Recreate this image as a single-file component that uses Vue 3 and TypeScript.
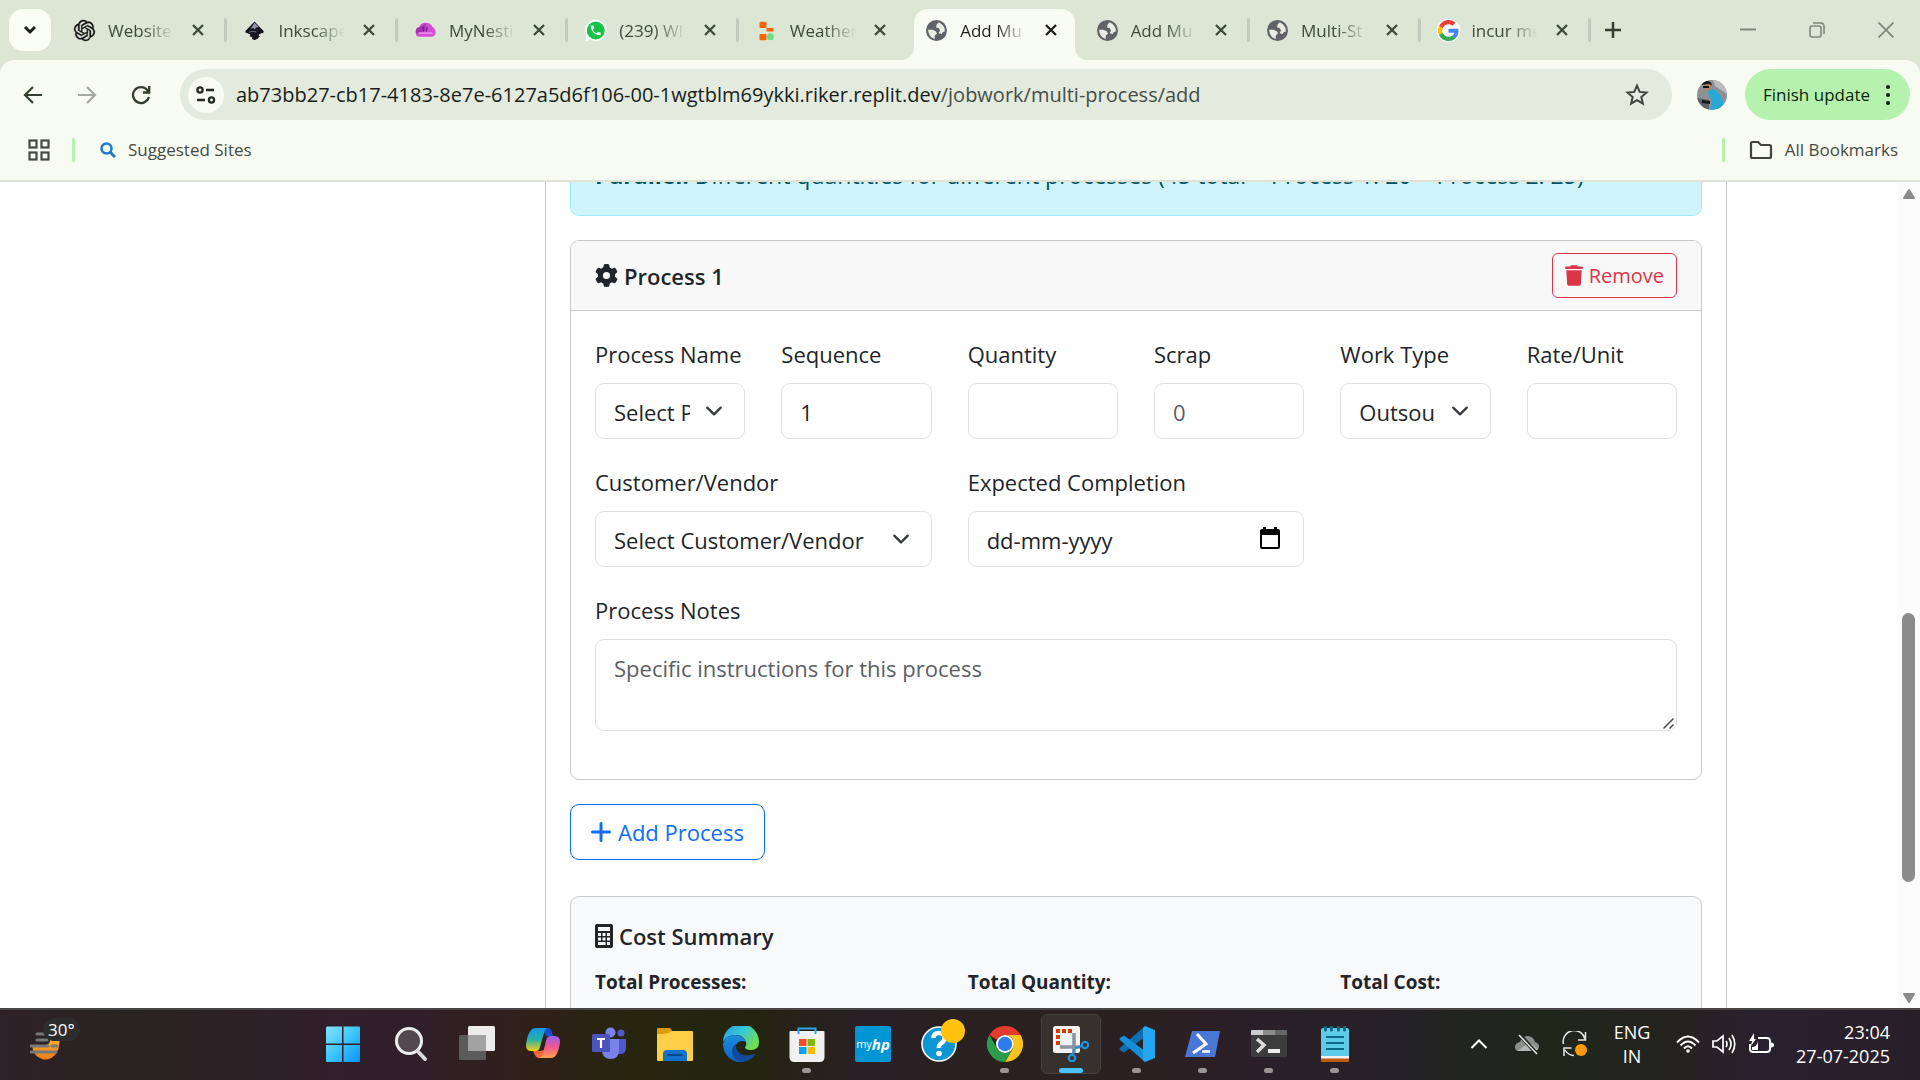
<script setup lang="ts">
import { onMounted, ref } from 'vue'

interface Tab {
  id: number
  title: string
  icon: 'openai' | 'inkscape' | 'nesting' | 'whatsapp' | 'weather' | 'globe' | 'google'
  active?: boolean
}

const tabs: Tab[] = [
  { id: 1, title: 'Website', icon: 'openai' },
  { id: 2, title: 'Inkscape', icon: 'inkscape' },
  { id: 3, title: 'MyNesti', icon: 'nesting' },
  { id: 4, title: '(239) Wl', icon: 'whatsapp' },
  { id: 5, title: 'Weather', icon: 'weather' },
  { id: 6, title: 'Add Mu', icon: 'globe', active: true },
  { id: 7, title: 'Add Mu', icon: 'globe' },
  { id: 8, title: 'Multi-St', icon: 'globe' },
  { id: 9, title: 'incur me', icon: 'google' },
]

interface TaskApp {
  name: string
  running?: boolean
  active?: boolean
}

const apps: TaskApp[] = [
  { name: 'Start' },
  { name: 'Search' },
  { name: 'Task View' },
  { name: 'Copilot' },
  { name: 'Teams' },
  { name: 'File Explorer' },
  { name: 'Edge' },
  { name: 'Store', running: true },
  { name: 'myHP' },
  { name: 'HP Support' },
  { name: 'Chrome', running: true },
  { name: 'Snipping Tool', running: true, active: true },
  { name: 'VS Code', running: true },
  { name: 'PowerShell', running: true },
  { name: 'Terminal', running: true },
  { name: 'Notepad', running: true },
]

const sequence = ref('1')
const quantity = ref('')
const scrap = ref('')
const rate = ref('')
const completion = ref('')
const notes = ref('')

const pane = ref<HTMLElement | null>(null)
onMounted(() => {
  if (pane.value) pane.value.scrollTop = 52
})
</script>

<template>
  <div class="screen">
    <header class="browser">
      <div class="tabstrip">
        <button class="tab-search" aria-label="Search tabs">
          <svg width="14" height="10" viewBox="0 0 14 10"><path d="M2 2l5 5 5-5" fill="none" stroke="#1a1f18" stroke-width="3" /></svg>
        </button>
        <div class="tabs">
          <div v-for="tab in tabs" :key="tab.id" class="tab" :class="{ active: tab.active, plain: tab.id === 5 }">
            <svg v-if="tab.icon === 'openai'" class="fav" viewBox="0 0 24 24"><path fill="#111" stroke="#111" stroke-width=".4" d="M22.2819 9.8211a5.9847 5.9847 0 0 0-.5157-4.9108 6.0462 6.0462 0 0 0-6.5098-2.9A6.0651 6.0651 0 0 0 4.9807 4.1818a5.9847 5.9847 0 0 0-3.9977 2.9 6.0462 6.0462 0 0 0 .7427 7.0966 5.98 5.98 0 0 0 .511 4.9107 6.051 6.051 0 0 0 6.5146 2.9001A5.9847 5.9847 0 0 0 13.2599 24a6.0557 6.0557 0 0 0 5.7718-4.2058 5.9894 5.9894 0 0 0 3.9977-2.9001 6.0557 6.0557 0 0 0-.7475-7.0729zm-9.022 12.6081a4.4755 4.4755 0 0 1-2.8764-1.0408l.1419-.0804 4.7783-2.7582a.7948.7948 0 0 0 .3927-.6813v-6.7369l2.02 1.1686a.071.071 0 0 1 .038.052v5.5826a4.504 4.504 0 0 1-4.4945 4.4944zm-9.6607-4.1254a4.4708 4.4708 0 0 1-.5346-3.0137l.142.0852 4.783 2.7582a.7712.7712 0 0 0 .7806 0l5.8428-3.3685v2.3324a.0804.0804 0 0 1-.0332.0615L9.74 19.9502a4.4992 4.4992 0 0 1-6.1408-1.6464zM2.3408 7.8956a4.485 4.485 0 0 1 2.3655-1.9728V11.6a.7664.7664 0 0 0 .3879.6765l5.8144 3.3543-2.0201 1.1685a.0757.0757 0 0 1-.071 0l-4.8303-2.7865A4.504 4.504 0 0 1 2.3408 7.872zm16.5963 3.8558L13.1038 8.364 15.1192 7.2a.0757.0757 0 0 1 .071 0l4.8303 2.7913a4.4944 4.4944 0 0 1-.6765 8.1042v-5.6772a.79.79 0 0 0-.407-.667zm2.0107-3.0231l-.142-.0852-4.7735-2.7818a.7759.7759 0 0 0-.7854 0L9.409 9.2297V6.8974a.0662.0662 0 0 1 .0284-.0615l4.8303-2.7866a4.4992 4.4992 0 0 1 6.6802 4.66zM8.3065 12.863l-2.02-1.1638a.0804.0804 0 0 1-.038-.0567V6.0742a4.4992 4.4992 0 0 1 7.3757-3.4537l-.142.0805L8.704 5.459a.7948.7948 0 0 0-.3927.6813zm1.0976-2.3654l2.602-1.4998 2.6069 1.4998v2.9994l-2.5974 1.4997-2.6067-1.4997Z" /></svg>
            <svg v-else-if="tab.icon === 'inkscape'" class="fav" viewBox="0 0 24 24">
              <path d="M12 1L23 12.500q.8 3-4 3.500l-2 1.500 3 1-3 1.500-1 2-4 1.500-4-1.500 1-2-5-1.500 3-1.500-5-2Q0 14 1.500 12z" fill="#15171f" stroke="#fff" stroke-width="1" />
              <path d="M12 3l5 5-3 .5-1.500 2-2-1.500-3 1z" fill="#8e96a8" />
              <path d="M6 14q5-2 8 0" stroke="#59617a" stroke-width="1.500" fill="none" />
            </svg>
            <svg v-else-if="tab.icon === 'nesting'" class="fav" viewBox="0 0 24 24">
              <path d="M1 15Q0 9 5 8q1-5 7-5t8 5q4 2 3.500 7-1 4-5 4H5q-4 0-4-4z" fill="#d44fd3" />
              <path d="M1 15Q0 9 5 8l7-4v7q-5 5-11 4z" fill="#a532b4" />
              <path d="M9 8l1 5m4-5l-1 5" stroke="#6a1b84" stroke-width="1.500" />
              <path d="M4 15h16" stroke="#e78ae4" stroke-width="2" />
            </svg>
            <svg v-else-if="tab.icon === 'whatsapp'" class="fav" viewBox="0 0 24 24">
              <path d="M0 24.500l1.800-6.400A12.300 12.300 0 1 1 6.500 22.700z" fill="#fff" />
              <circle cx="12.300" cy="12" r="10.300" fill="#15c447" />
              <path transform="translate(4.800 4.500) scale(.62)" fill="#fff" d="M6.620 10.790c1.440 2.830 3.760 5.140 6.590 6.590l2.200-2.200c.27-.27.67-.36 1.020-.24 1.120.37 2.330.57 3.570.57.55 0 1 .45 1 1V20c0 .55-.45 1-1 1-9.390 0-17-7.610-17-17 0-.55.45-1 1-1h3.500c.55 0 1 .45 1 1 0 1.250.2 2.450.57 3.570.11.35.03.74-.25 1.020l-2.200 2.200z" />
            </svg>
            <svg v-else-if="tab.icon === 'weather'" class="fav" viewBox="0 0 24 24">
              <rect x="4" y="2" width="8" height="7" rx="1" fill="#fb640d" /><rect x="12" y="9" width="8" height="4" rx="1" fill="#fb640d" /><rect x="4" y="16" width="8" height="7" rx="1" fill="#fb640d" /><circle cx="16.500" cy="19" r="4" fill="#70dc82" />
            </svg>
            <svg v-else-if="tab.icon === 'globe'" class="fav" viewBox="0 0 24 24">
              <circle cx="12" cy="12" r="12" fill="#5f6368" />
              <path d="M14.500 2.500L12 5.500l-.5 3 3 .5 1.500 3-1.500 3 3.500 1 1-2 2.500-1Q22 6 14.500 2.500z" fill="#e7ede2" />
              <path d="M2.300 11l5.200.2 4 2 1 2.500-2.500 2v4Q3 19.500 2.300 11z" fill="#e7ede2" />
            </svg>
            <svg v-else class="fav" viewBox="0 0 48 48">
              <circle cx="24" cy="24" r="27" fill="#fff" />
              <path fill="#EA4335" d="M24 9.500c3.540 0 6.710 1.220 9.210 3.600l6.850-6.850C35.900 2.380 30.470 0 24 0 14.620 0 6.510 5.380 2.560 13.220l7.980 6.190C12.430 13.720 17.740 9.500 24 9.500z" />
              <path fill="#4285F4" d="M46.980 24.550c0-1.570-.15-3.090-.38-4.550H24v9.020h12.940c-.58 2.960-2.260 5.480-4.780 7.180l7.730 6c4.510-4.180 7.090-10.360 7.090-17.650z" />
              <path fill="#FBBC05" d="M10.530 28.590c-.48-1.450-.76-2.990-.76-4.590s.27-3.140.76-4.590l-7.980-6.190C.92 16.460 0 20.120 0 24c0 3.880.92 7.540 2.560 10.780l7.970-6.190z" />
              <path fill="#34A853" d="M24 48c6.480 0 11.930-2.130 15.890-5.810l-7.730-6c-2.150 1.450-4.920 2.300-8.160 2.300-6.260 0-11.570-4.220-13.470-9.910l-7.980 6.190C6.510 42.620 14.620 48 24 48z" />
            </svg>
            <span class="tab-title">{{ tab.title }}</span>
            <button class="tab-close" :aria-label="`Close ${tab.title}`">
              <svg width="12" height="12" viewBox="0 0 12 12"><path d="M1 1l10 10M11 1L1 11" fill="none" stroke="currentColor" stroke-width="2.300" /></svg>
            </button>
          </div>
        </div>
        <button class="new-tab" aria-label="New tab">
          <svg width="16" height="16" viewBox="0 0 16 16"><path d="M8 0v16M0 8h16" stroke="#333d31" stroke-width="2.500" /></svg>
        </button>
        <div class="window-buttons">
          <button aria-label="Minimize"><svg width="16" height="16" viewBox="0 0 16 16"><path d="M0 7.500h16" stroke="#7f867b" stroke-width="2" /></svg></button>
          <button aria-label="Restore"><svg width="16" height="16" viewBox="0 0 16 16" fill="none" stroke="#7f867b" stroke-width="1.600"><rect x="1" y="4" width="11" height="11" rx="2" /><path d="M4 1h7.500q3.500 0 3.500 3.500V12" /></svg></button>
          <button aria-label="Close"><svg width="16" height="16" viewBox="0 0 16 16"><path d="M.5.5l15 15M15.500.5l-15 15" stroke="#7f867b" stroke-width="1.700" /></svg></button>
        </div>
      </div>

      <div class="toolbar">
        <nav class="nav-buttons" aria-label="History">
          <button aria-label="Back"><svg width="20" height="20" viewBox="0 0 20 20"><path d="M19 10H2.500M10 2L2 10l8 8" fill="none" stroke="#33402f" stroke-width="2.200" /></svg></button>
          <button aria-label="Forward"><svg width="20" height="20" viewBox="0 0 20 20"><path d="M1 10h16.500M10 2l8 8-8 8" fill="none" stroke="#a3a9a0" stroke-width="2.200" /></svg></button>
          <button aria-label="Reload"><svg width="20" height="20" viewBox="0 0 20 20"><path d="M17.800 12A8 8 0 1 1 16.500 5.300L18 7M18.200 1v6.500H12" fill="none" stroke="#33402f" stroke-width="2.300" /></svg></button>
        </nav>
        <div class="omnibox">
          <button class="site-info" aria-label="View site information">
            <svg width="20" height="18" viewBox="0 0 20 18" fill="none" stroke="#222b20" stroke-width="2.300"><circle cx="4" cy="4" r="2.600" /><path d="M10 4h8M1 14h8" /><circle cx="15.500" cy="14" r="2.600" /></svg>
          </button>
          <div class="url"><span>ab73bb27-cb17-4183-8e7e-6127a5d6f106-00-1wgtblm69ykki.riker.replit.dev</span><span class="url-path">/jobwork/multi-process/add</span></div>
          <button class="star" aria-label="Bookmark this tab">
            <svg width="24" height="24" viewBox="0 0 24 24"><path d="M12 2.600l2.700 6.300 6.800.6-5.200 4.500 1.600 6.700-5.900-3.500-5.900 3.500 1.600-6.700L2.500 9.500l6.800-.6z" fill="none" stroke="#3f463d" stroke-width="2" /></svg>
          </button>
        </div>
        <button class="avatar" aria-label="Profile">
          <svg width="30" height="30" viewBox="0 0 30 30">
            <defs><clipPath id="avatarClip"><circle cx="15" cy="15" r="15" /></clipPath></defs>
            <g clip-path="url(#avatarClip)">
              <rect width="30" height="30" fill="#8d9194" /><path d="M16 0h14v14L18 6z" fill="#b9bcbe" /><path d="M0 18l12 2v10H0z" fill="#5c6165" />
              <path d="M11 10q7-3 11 4 4 6 5 10l-4 5-10 1 2-10-4-6z" fill="#27a9d6" />
              <circle cx="10" cy="7" r="4" fill="#b77f63" /><path d="M5 5q0-4 5-4 4 0 5 4l-4-1z" fill="#16181b" /><path d="M6 7h6" stroke="#111" stroke-width="2" />
              <path d="M5 20l8 1v3l-8-1z" fill="#15191d" />
            </g>
          </svg>
        </button>
        <button class="update">
          <span>Finish update</span>
          <svg width="4" height="22" viewBox="0 0 4 22" fill="#0c1f0c"><circle cx="2" cy="3" r="2" /><circle cx="2" cy="11" r="2" /><circle cx="2" cy="19" r="2" /></svg>
        </button>
      </div>

      <div class="bookmarks">
        <button class="apps-grid" aria-label="Apps">
          <svg width="22" height="22" viewBox="0 0 22 22" fill="none" stroke="#454a43" stroke-width="2.200"><rect x="1.500" y="1.500" width="7" height="7" /><rect x="13.500" y="1.500" width="7" height="7" /><rect x="1.500" y="13.500" width="7" height="7" /><rect x="13.500" y="13.500" width="7" height="7" /></svg>
        </button>
        <span class="divider"></span>
        <a class="bookmark" href="#suggested">
          <svg width="16" height="16" viewBox="0 0 16 16" fill="none" stroke="#1f7bd0"><circle cx="6.500" cy="6.500" r="5" stroke-width="2.500" /><path d="M10 10l5 5" stroke-width="3" /></svg>
          <span>Suggested Sites</span>
        </a>
        <span class="divider last"></span>
        <a class="bookmark all" href="#bookmarks">
          <svg width="24" height="20" viewBox="0 0 24 20"><path d="M2 3.500Q2 2 3.500 2H9l3 3h8.500Q22 5 22 6.500v10q0 1.500-1.500 1.500h-17Q2 18 2 16.500z" fill="none" stroke="#3f443d" stroke-width="2.200" /></svg>
          <span>All Bookmarks</span>
        </a>
      </div>
    </header>

    <div class="viewport">
      <main ref="pane" class="pane">
        <div class="sheet">
          <div class="alert"><strong>Parallel:</strong> Different quantities for different processes (45 total = Process 1: 20 + Process 2: 25)</div>

          <section class="card">
            <div class="card-header">
              <h6>
                <svg width="23" height="23" viewBox="0 0 512 512" fill="#212529"><path d="M495.900 166.600c3.200 8.700 .5 18.400-6.400 24.600l-43.300 39.400c1.100 8.300 1.700 16.800 1.700 25.400s-.6 17.100-1.700 25.400l43.300 39.400c6.900 6.200 9.600 15.900 6.400 24.600c-4.400 11.900-9.700 23.300-15.800 34.300l-4.700 8.100c-6.600 11-14 21.400-22.100 31.200c-5.900 7.200-15.700 9.600-24.500 6.800l-55.700-17.700c-13.400 10.300-28.200 18.900-44 25.400l-12.500 57.100c-2 9.100-9 16.300-18.200 17.800c-13.800 2.300-28 3.500-42.500 3.500s-28.700-1.200-42.500-3.500c-9.200-1.500-16.200-8.700-18.200-17.800l-12.500-57.100c-15.800-6.500-30.600-15.100-44-25.400L83.100 425.900c-8.800 2.800-18.600 .3-24.500-6.800c-8.100-9.800-15.500-20.200-22.100-31.200l-4.700-8.100c-6.100-11-11.400-22.400-15.800-34.300c-3.200-8.700-.5-18.400 6.400-24.600l43.300-39.400C64.600 273.100 64 264.600 64 256s.6-17.100 1.700-25.400L22.400 191.200c-6.900-6.200-9.600-15.900-6.400-24.600c4.400-11.900 9.700-23.300 15.800-34.300l4.700-8.100c6.600-11 14-21.400 22.100-31.200c5.900-7.200 15.700-9.600 24.500-6.800l55.700 17.700c13.400-10.300 28.200-18.900 44-25.400l12.500-57.100c2-9.100 9-16.300 18.200-17.800C227.300 1.200 241.500 0 256 0s28.700 1.200 42.500 3.500c9.200 1.500 16.200 8.700 18.200 17.800l12.500 57.100c15.800 6.500 30.600 15.100 44 25.400l55.700-17.700c8.800-2.800 18.600-.3 24.500 6.800c8.100 9.800 15.500 20.200 22.100 31.200l4.700 8.100c6.100 11 11.400 22.400 15.800 34.300zM256 336a80 80 0 1 0 0-160 80 80 0 1 0 0 160z" /></svg>
                <span>Process 1</span>
              </h6>
              <button class="remove">
                <svg width="18" height="21" viewBox="0 0 448 512" fill="#dc3545"><path d="M135.200 17.700L128 32H32C14.300 32 0 46.300 0 64S14.300 96 32 96H416c17.700 0 32-14.300 32-32s-14.300-32-32-32H320l-7.200-14.300C307.400 6.800 296.300 0 284.200 0H163.800c-12.100 0-23.200 6.800-28.600 17.700zM416 128H32L53.200 467c1.600 25.300 22.600 45 47.900 45H346.900c25.300 0 46.300-19.700 47.900-45L416 128z" /></svg>
                <span>Remove</span>
              </button>
            </div>
            <div class="card-body">
              <div class="grid six">
                <div class="field">
                  <label for="process-name">Process Name</label>
                  <div class="control">
                    <select id="process-name"><option>Select Process</option></select>
                    <svg class="chevron" viewBox="0 0 16 16"><path d="m2 5 6 6 6-6" /></svg>
                  </div>
                </div>
                <div class="field"><label for="sequence">Sequence</label><input id="sequence" v-model="sequence" type="text" inputmode="numeric" /></div>
                <div class="field"><label for="quantity">Quantity</label><input id="quantity" v-model="quantity" type="text" inputmode="numeric" /></div>
                <div class="field"><label for="scrap">Scrap</label><input id="scrap" v-model="scrap" type="text" inputmode="numeric" placeholder="0" /></div>
                <div class="field">
                  <label for="work-type">Work Type</label>
                  <div class="control">
                    <select id="work-type"><option>Outsourced</option></select>
                    <svg class="chevron" viewBox="0 0 16 16"><path d="m2 5 6 6 6-6" /></svg>
                  </div>
                </div>
                <div class="field"><label for="rate">Rate/Unit</label><input id="rate" v-model="rate" type="text" inputmode="decimal" /></div>
              </div>
              <div class="grid three">
                <div class="field">
                  <label for="vendor">Customer/Vendor</label>
                  <div class="control">
                    <select id="vendor"><option>Select Customer/Vendor</option></select>
                    <svg class="chevron" viewBox="0 0 16 16"><path d="m2 5 6 6 6-6" /></svg>
                  </div>
                </div>
                <div class="field">
                  <label for="completion">Expected Completion</label>
                  <div class="control date">
                    <input id="completion" v-model="completion" type="text" placeholder="dd-mm-yyyy" />
                    <button class="calendar" aria-label="Open calendar">
                      <svg width="20" height="22" viewBox="0 0 20 22"><path d="M0 4q0-2 2-2h1V0h3v2h8V0h3v2h1q2 0 2 2v16q0 2-2 2H2q-2 0-2-2zM2 8v12h16V8z" fill="#000" fill-rule="evenodd" /></svg>
                    </button>
                  </div>
                </div>
              </div>
              <div class="field notes">
                <label for="notes">Process Notes</label>
                <div class="control">
                  <textarea id="notes" v-model="notes" rows="2" placeholder="Specific instructions for this process"></textarea>
                  <svg class="grip" width="11" height="11" viewBox="0 0 11 11"><path d="M.5 10.500l10-10M6.500 10.500l4-4" stroke="#4a4a4a" stroke-width="1.500" /></svg>
                </div>
              </div>
            </div>
          </section>

          <button class="add">
            <svg width="20" height="20" viewBox="0 0 20 20"><path d="M10 1.500v17M1.500 10h17" stroke="#0d6efd" stroke-width="3" stroke-linecap="round" /></svg>
            <span>Add Process</span>
          </button>

          <section class="card summary">
            <h6>
              <svg width="18" height="24" viewBox="0 0 18 24"><rect width="18" height="24" rx="2" fill="#212529" /><path d="M3 3h12v4H3zM3 9h3v3H3zm4.500 0h3v3h-3zM12 9h3v3h-3zM3 13.500h3v3H3zm4.500 0h3v3h-3zm4.500 0h3v3h-3zM3 18h7.500v3H3zm9 0h3v3h-3z" fill="#f8f9fa" /></svg>
              <span>Cost Summary</span>
            </h6>
            <div class="grid three totals">
              <strong>Total Processes:</strong>
              <strong>Total Quantity:</strong>
              <strong>Total Cost:</strong>
            </div>
          </section>
        </div>
      </main>
      <div class="scrollbar" aria-hidden="true">
        <svg width="16" height="12" viewBox="0 0 16 12"><path d="M8 2l5 8H3z" fill="#8b8b8b" stroke="#8b8b8b" stroke-width="2" stroke-linejoin="round" /></svg>
        <div class="track"><div class="thumb"></div></div>
        <svg width="16" height="12" viewBox="0 0 16 12"><path d="M8 10l5-8H3z" fill="#8b8b8b" stroke="#8b8b8b" stroke-width="2" stroke-linejoin="round" /></svg>
      </div>
    </div>

    <footer class="taskbar">
      <button class="weather" aria-label="Weather">
        <svg width="30" height="30" viewBox="0 0 30 30">
          <defs><linearGradient id="sun" x1="0" y1="0" x2="0" y2="1"><stop offset="0" stop-color="#f7b62d" /><stop offset="1" stop-color="#f07a1c" /></linearGradient></defs>
          <path d="M2 14Q22 16 20 6l9-1q2 10-4 18-6 6-13 4-8-2-10-13z" fill="url(#sun)" />
          <path d="M7 2h7M7 8h10M1 14h17M22 14h5M1 20h25" stroke="#77787a" stroke-width="3" stroke-linecap="round" />
        </svg>
        <span class="degrees">30°</span>
      </button>

      <nav class="apps" aria-label="Taskbar">
        <button v-for="app in apps" :key="app.name" class="app" :class="{ running: app.running, active: app.active }" :aria-label="app.name">
          <svg v-if="app.name === 'Start'" viewBox="0 0 36 36">
            <defs><linearGradient id="win" x1="0" y1="0" x2="1" y2="1"><stop offset="0" stop-color="#86e2fb" /><stop offset=".5" stop-color="#3cc6fb" /><stop offset="1" stop-color="#0a91f8" /></linearGradient></defs>
            <path d="M2 .5h15v17H1v-16zM18.500.5H34q1 0 1 1v16H18.500zM1 19h16v17H2q-1 0-1-1zM18.500 19H35v16q0 1-1 1H18.500z" fill="url(#win)" />
          </svg>
          <svg v-else-if="app.name === 'Search'" viewBox="0 0 36 36"><circle cx="16" cy="15" r="12.500" fill="#54484f" stroke="#eceeed" stroke-width="3" /><path d="M24.500 25L32 33" stroke="#d8dbdb" stroke-width="4" stroke-linecap="round" /></svg>
          <svg v-else-if="app.name === 'Task View'" viewBox="0 0 36 36"><rect x="9" y="0" width="27" height="25" rx="1.500" fill="#ececec" /><rect x="0" y="9" width="27" height="25" rx="1.500" fill="#5b5b5b" /><rect x="9" y="9" width="18" height="16" fill="#a2a2a2" /></svg>
          <svg v-else-if="app.name === 'Copilot'" viewBox="0 0 36 36">
            <defs>
              <linearGradient id="cpA" x1="0" y1="0" x2="0" y2="1"><stop offset="0" stop-color="#1795ef" /><stop offset=".5" stop-color="#27b2a6" /><stop offset="1" stop-color="#f7cf12" /></linearGradient>
              <linearGradient id="cpB" x1="0" y1="0" x2="0" y2="1"><stop offset="0" stop-color="#9a5cf5" /><stop offset=".5" stop-color="#f0588e" /><stop offset="1" stop-color="#ffa44c" /></linearGradient>
            </defs>
            <path d="M17 2h6q3 0 4 4l1 4h-7z" fill="#1c4cc9" />
            <path d="M11 2h11q-2 1-3 5l-4 14q-1 4-4 4H6q-5 0-5-6Q3 2 11 2z" fill="url(#cpA)" />
            <path d="M8 25h7l4-1-1 8H14q-3 0-4-3z" fill="#f4663a" />
            <path d="M23 10h7q5 0 5 6-2 16-9 16H14q3-1 4-5l3-12q1-5 4-5z" fill="url(#cpB)" />
          </svg>
          <svg v-else-if="app.name === 'Teams'" viewBox="0 0 36 36">
            <circle cx="30" cy="7" r="3.500" fill="#5059c9" /><path d="M25 13h10v9q0 6-6 6h-4z" fill="#5059c9" /><circle cx="19.500" cy="6.500" r="5" fill="#7b83eb" /><path d="M11 13h17v11q0 9-8.500 9-7 0-8.500-7z" fill="#7b83eb" />
            <rect x="1" y="8" width="18" height="18" rx="1.500" fill="#4b53bc" /><path d="M6 13h8M10 13v9" stroke="#fff" stroke-width="2.200" />
          </svg>
          <svg v-else-if="app.name === 'File Explorer'" viewBox="0 0 36 36">
            <path d="M0 3q0-1 1-1h12l3 4v5H0z" fill="#dd9b0b" /><path d="M0 8q8 0 11-1l4-2h20q1 0 1 1v28q0 1-1 1H1q-1 0-1-1z" fill="#ffcf48" /><path d="M6 35V28q0-4 4-4h16q4 0 4 4v7z" fill="#1373cc" /><path d="M11 29h14" stroke="#0a4688" stroke-width="2" stroke-linecap="round" />
          </svg>
          <svg v-else-if="app.name === 'Edge'" viewBox="0 0 36 36">
            <defs>
              <linearGradient id="edA" x1="0" y1="0" x2="1" y2=".6"><stop offset="0" stop-color="#2a9be0" /><stop offset=".5" stop-color="#35c5dd" /><stop offset="1" stop-color="#6fe04d" /></linearGradient>
              <linearGradient id="edB" x1="0" y1="0" x2="0" y2="1"><stop offset="0" stop-color="#1a8ee0" /><stop offset="1" stop-color="#0c62be" /></linearGradient>
            </defs>
            <path d="M0 16A18 18 0 0 1 36 16q0 8-8 8-6 0-6-3 2-2 1-5-2-6-9-7Q4 8 0 16z" fill="url(#edA)" />
            <path d="M0 18Q2 9 12 9q9 1 11 7-7-3-10 3-2 8 6 13 3 3 2 4A18 18 0 0 1 0 18z" fill="url(#edB)" />
            <path d="M13 18q-1 9 8 11 7 1 12-2-4 8-14 9-9-2-10-10-0-6 4-8z" fill="#114a9a" />
          </svg>
          <svg v-else-if="app.name === 'Store'" viewBox="0 0 36 36">
            <path d="M.5 6q0-1 1-1h33q1 0 1 1v25q0 5-5 5h-25q-5 0-5-5z" fill="#f1f1f1" /><path d="M9.500 8V2.500h17V8" fill="none" stroke="#2ba8ea" stroke-width="2" />
            <path d="M10 13h7.500v7H10z" fill="#f25022" /><path d="M18.500 13H26v7h-7.500z" fill="#7fba00" /><path d="M10 21h7.500v7H10z" fill="#00a4ef" /><path d="M18.500 21H26v7h-7.500z" fill="#ffb900" />
          </svg>
          <span v-else-if="app.name === 'myHP'" class="myhp">my<b>hp</b></span>
          <svg v-else-if="app.name === 'HP Support'" viewBox="0 0 36 36">
            <circle cx="18" cy="18" r="17" fill="#0d96d6" stroke="#fff" stroke-width="1.600" /><path d="M12.500 12q0-5 5.500-5t5.500 5q0 3-3 5t-2.500 5" fill="none" stroke="#fff" stroke-width="4.500" /><circle cx="18" cy="27.500" r="2.800" fill="#fff" />
          </svg>
          <svg v-else-if="app.name === 'Chrome'" viewBox="0 0 36 36">
            <path d="M18 0a18 18 0 0 1 15.600 9H18a9 9 0 0 0-8 5L2.400 9A18 18 0 0 1 18 0z" fill="#e33b2e" /><path d="M33.600 9A18 18 0 0 1 18 36l7.800-13.500A9 9 0 0 0 18 9z" fill="#fcc31e" /><path d="M18 36A18 18 0 0 1 2.400 9l7.800 13.500A9 9 0 0 0 25.800 22.500z" fill="#2b9d4b" /><circle cx="18" cy="18" r="9" fill="#fff" /><circle cx="18" cy="18" r="7.200" fill="#2f7bee" />
          </svg>
          <svg v-else-if="app.name === 'Snipping Tool'" viewBox="0 0 36 36">
            <rect x="0" y="0" width="27" height="27" rx="2.500" fill="#f0f2f4" /><path d="M3 3h4v4H3zM9 3h4v4H9zM15 3h4v4h-4zM3 9h4v4H3zM3 15h4v4H3z" fill="#d83b01" />
            <path d="M21 7v20M7 21h20" stroke="#8a949e" stroke-width="3.500" /><circle cx="32" cy="19" r="3.200" fill="none" stroke="#1f93dd" stroke-width="2.200" /><circle cx="19" cy="32" r="3.200" fill="none" stroke="#1f93dd" stroke-width="2.200" /><path d="M22 22l7-2M21 23l-1 6" stroke="#1f93dd" stroke-width="2" />
          </svg>
          <svg v-else-if="app.name === 'VS Code'" viewBox="0 0 36 36">
            <path d="M26 0v11L5 26.500 1 24q-1-1 0-2z" fill="#0c6fb4" /><path d="M26 36V25L5 9.500 1 12q-1 1 0 2z" fill="#158fd8" /><path d="M26 0l10 4v28l-10 4-2-2V2z" fill="#26a6f0" />
          </svg>
          <svg v-else-if="app.name === 'PowerShell'" viewBox="0 0 36 36">
            <path d="M7 5h28l-5 26H0z" fill="#4877d6" /><path d="M12 8l9 10-13 9" fill="none" stroke="#fff" stroke-width="3" /><path d="M17 25.500h8" stroke="#fff" stroke-width="2.500" />
          </svg>
          <svg v-else-if="app.name === 'Terminal'" viewBox="0 0 36 36">
            <rect x="0" y="4" width="36" height="27" rx="1.500" fill="#3c3c3c" /><path d="M0 5q0-1 1-1h11v5H0z" fill="#ccc" /><path d="M12 4h12v5H12z" fill="#8b8b8b" /><path d="M24 4h11q1 0 1 1v4H24z" fill="#666" /><path d="M6 13l7 6-7 7" fill="none" stroke="#dcdcdc" stroke-width="3.500" /><path d="M17 25h12" stroke="#eee" stroke-width="4" />
          </svg>
          <svg v-else viewBox="0 0 36 36">
            <path d="M4 4q0-2 2-2h24q2 0 2 2v27H4z" fill="#5fcbe6" /><path d="M4 30h28v3H4z" fill="#f2f2f2" /><path d="M4 32.500h28V35q0 1-1 1H5q-1 0-1-1z" fill="#bd5b12" /><path d="M9 11h18M9 17h18M9 23h18" stroke="#0b6a86" stroke-width="2" /><path d="M8.500 1v3M14.500 1v3M21.500 1v3M27.500 1v3" stroke="#0b6a86" stroke-width="3" stroke-linecap="round" />
          </svg>
          <span v-if="app.name === 'HP Support'" class="badge"></span>
        </button>
      </nav>

      <div class="tray">
        <button aria-label="Show hidden icons"><svg width="18" height="10" viewBox="0 0 18 10"><path d="M1.500 9L9 1.500 16.500 9" fill="none" stroke="#fff" stroke-width="2" /></svg></button>
        <button aria-label="OneDrive"><svg width="26" height="22" viewBox="0 0 26 22"><path d="M5 18q-4 0-4-4t5-5q2-6 8-6 6 1 7 6 4 1 4 4.500T21 18z" fill="#8b8f8c" /><path d="M3 18l12-8q6 3 9 6-1 2-4 2z" fill="#b4b6b4" /><path d="M5 1l18 20" stroke="#22261d" stroke-width="4" /><path d="M5 2l18 19" stroke="#e8e8e8" stroke-width="1.500" /></svg></button>
        <button aria-label="Windows Update"><svg width="26" height="26" viewBox="0 0 26 26"><path d="M1.500 13A11 11 0 0 1 23 8M23.500 1v8H16M12 24.500A11 11 0 0 1 3 19M2 25v-8h7.500" fill="none" stroke="#e6e6e6" stroke-width="1.500" /><circle cx="19" cy="19" r="6" fill="#ff9a0a" /></svg></button>
        <button class="language"><span>ENG</span><span>IN</span></button>
        <button class="system" aria-label="Network, sound and battery">
          <svg width="24" height="20" viewBox="0 0 24 20" fill="none" stroke="#fff" stroke-width="1.900"><path d="M1 8.500Q12-3.500 23 8.500M4.500 11.500q7.500-8 15 0M8 14.500q4-4.500 8 0" /><circle cx="12" cy="17" r="1.800" fill="#fff" stroke="none" /></svg>
          <svg width="24" height="22" viewBox="0 0 24 22" fill="none" stroke="#fff" stroke-width="1.700"><path d="M1 8h4l6-5v16l-6-5H1z" /><path d="M14 8q2 3 0 6M17 5q4 6 0 12M20 2q5.500 9 0 18" /></svg>
          <svg width="26" height="22" viewBox="0 0 26 22" fill="none" stroke="#fff" stroke-width="1.900"><path d="M10 5h9q3 0 3 3v8q0 3-3 3H5q-3 0-3-3v-5" /><path d="M23 9.500q3 0 3 2.500t-3 2.500z" fill="#fff" stroke="none" /><path d="M6 0L1 8h3l-1 5 5-7H6z" fill="#fff" stroke="none" /><path d="M4 17v-3q5 0 6-6v9z" fill="#fff" stroke="none" /></svg>
        </button>
        <button class="clock"><span>23:04</span><span>27-07-2025</span></button>
      </div>
    </footer>
  </div>
</template>

<style>
body {
  margin: 0;
  background: #fff;
}
</style>

<style scoped>
* {
  box-sizing: border-box;
}
.screen {
  display: flex;
  flex-direction: column;
  height: 100vh;
  overflow: hidden;
  font-family: "Open Sans", "Noto Sans", sans-serif;
  font-size: 22px;
  line-height: 36px;
  color: #212529;
}
button {
  display: flex;
  align-items: center;
  justify-content: center;
  margin: 0;
  padding: 0;
  border: 0;
  background: none;
  font: inherit;
  color: inherit;
}
svg {
  display: block;
  flex: none;
}

/* browser chrome */
.browser {
  flex: none;
  background: #dbe6d5;
  border-bottom: 2px solid #dfe3d6;
}
.tabstrip {
  display: flex;
  height: 60px;
  padding-left: 9px;
}
.tab-search {
  width: 42px;
  height: 42px;
  margin: 9px 6px 0 0;
  border-radius: 14px;
  background: #f9fdf3;
}
.tabs {
  display: flex;
  flex: 0 1 1534px;
  min-width: 0;
}
.tab {
  position: relative;
  display: flex;
  flex: 1 1 0;
  align-items: center;
  min-width: 0;
  height: 51px;
  margin-top: 9px;
  padding: 0 23px 9px 17px;
  font-size: 17px;
  line-height: 24px;
  color: #3c4b39;
}
.tab::after {
  content: "";
  position: absolute;
  right: 0;
  top: 9px;
  width: 3px;
  height: 24px;
  border-radius: 2px;
  background: #c3cabf;
}
.tab.plain::after {
  display: none;
}
.tab.active {
  color: #1a1f18;
}
.tab.active::before {
  content: "";
  position: absolute;
  z-index: 0;
  inset: 0 5px;
  border-radius: 14px 14px 0 0;
  background: #f8fbf1;
}
.tab.active::after {
  top: auto;
  right: -9px;
  bottom: 0;
  left: -9px;
  width: auto;
  height: 14px;
  border-radius: 0;
  background:
    radial-gradient(circle at 0 0, transparent 14px, #f8fbf1 15px) left / 14px 14px no-repeat,
    radial-gradient(circle at 100% 0, transparent 14px, #f8fbf1 15px) right / 14px 14px no-repeat;
}
.tab > * {
  position: relative;
  z-index: 1;
}
.fav {
  width: 21px;
  height: 21px;
  overflow: visible;
}
.tab-title {
  flex: 1 1 0;
  min-width: 0;
  margin: 2px 14px 0 13px;
  white-space: nowrap;
  mask-image: linear-gradient(to right, #000 50%, transparent 94%);
}
.tab-close {
  width: 12px;
  height: 24px;
}
.new-tab {
  width: 44px;
  height: 60px;
}
.window-buttons {
  display: flex;
  margin-left: auto;
}
.window-buttons button {
  width: 69px;
  height: 60px;
}
.toolbar {
  display: flex;
  align-items: center;
  height: 69px;
  padding: 0 10px 0 6px;
  border-radius: 14px 14px 0 0;
  background: #f8fbf1;
}
.nav-buttons {
  display: flex;
  width: 174px;
}
.nav-buttons button {
  width: 54px;
  height: 51px;
}
.omnibox {
  display: flex;
  flex: 1;
  align-items: center;
  min-width: 0;
  height: 51px;
  padding: 0 23px 0 8px;
  border-radius: 26px;
  background: #e3ebdf;
}
.site-info {
  width: 36px;
  height: 36px;
  border-radius: 18px;
  background: #f8fbf1;
}
.url {
  flex: 1;
  min-width: 0;
  margin-left: 12px;
  overflow: hidden;
  white-space: nowrap;
  font-size: 20px;
  line-height: 30px;
  color: #191d17;
}
.url-path {
  color: #474d44;
}
.avatar {
  margin: 0 18px 0 25px;
}
.update {
  gap: 16px;
  width: 165px;
  height: 51px;
  padding-right: 2px;
  border-radius: 26px;
  background: #b5f2ad;
  font-size: 17px;
  color: #0c1f0c;
  white-space: nowrap;
}
.bookmarks {
  display: flex;
  align-items: center;
  height: 51px;
  padding: 0 22px 9px 28px;
  background: #f8fbf1;
  font-size: 17px;
  line-height: 24px;
  color: #454a43;
}
.divider {
  width: 3px;
  height: 24px;
  margin: 0 25px 0 22px;
  border-radius: 2px;
  background: #b5f2ad;
}
.divider.last {
  margin: 0 24px 0 auto;
}
.bookmark {
  display: flex;
  align-items: center;
  gap: 12px;
  color: inherit;
  text-decoration: none;
}

/* page */
.viewport {
  display: flex;
  flex: 1;
  min-height: 0;
  background: #fff;
}
.pane {
  flex: 1;
  min-width: 0;
  padding-left: 375px;
  overflow: hidden;
}
.sheet {
  max-width: 1182px;
  margin: 0 auto;
  padding: 0 24px 96px;
  border: 1px solid #c9cacb;
  border-width: 0 1px;
}
.alert {
  padding: 26px 24px 22px;
  border: 1px solid #9eeaf9;
  border-radius: 9px;
  background: #cff4fc;
  font-size: 23px;
  color: #055160;
}
.card {
  margin-top: 24px;
  border: 1px solid #c9cacb;
  border-radius: 9px;
  background: #fff;
  overflow: hidden;
}
.card-header {
  display: flex;
  align-items: center;
  justify-content: space-between;
  padding: 12px 24px;
  border-bottom: 1px solid #c9cacb;
  background: #f8f8f8;
}
h6 {
  display: flex;
  align-items: center;
  gap: 6px;
  margin: 0;
  font-size: 22px;
  line-height: 30px;
  font-weight: 600;
}
.remove {
  gap: 6px;
  height: 45px;
  padding: 0 12px;
  border: 1px solid #dc3545;
  border-radius: 6px;
  font-size: 20px;
  color: #dc3545;
}
.card-body {
  padding: 24px;
}
.grid {
  display: grid;
  column-gap: 36px;
  margin-bottom: 24px;
}
.six {
  grid-template-columns: repeat(6, minmax(0, 1fr));
}
.three {
  grid-template-columns: repeat(3, minmax(0, 1fr));
}
.field {
  display: flex;
  flex-direction: column;
  gap: 10px;
  min-width: 0;
}
.field label {
  line-height: 38px;
  white-space: nowrap;
}
input,
select,
textarea {
  display: block;
  width: 100%;
  height: 56px;
  margin: 0;
  padding: 10px 18px 8px;
  border: 1px solid #dee2e6;
  border-radius: 9px;
  background: #fff;
  font: inherit;
  color: #212529;
  appearance: none;
}
::placeholder {
  color: #5b6066;
  opacity: 1;
}
.date input::placeholder {
  color: #212529;
}
.control {
  position: relative;
}
select {
  padding-right: 54px;
}
.chevron {
  position: absolute;
  top: 19px;
  right: 19px;
  width: 24px;
  height: 18px;
  fill: none;
  stroke: #343a40;
  stroke-width: 2;
  stroke-linecap: round;
  stroke-linejoin: round;
  pointer-events: none;
}
.calendar {
  position: absolute;
  top: 16px;
  right: 24px;
}
textarea {
  height: 92px;
  resize: none;
}
.grip {
  position: absolute;
  right: 3px;
  bottom: 2px;
}
.notes {
  margin-bottom: 24px;
}
.add {
  gap: 7px;
  height: 56px;
  margin-top: 24px;
  padding: 0 20px;
  border: 1px solid #0d6efd;
  border-radius: 9px;
  color: #0d6efd;
}
.summary {
  margin-top: 36px;
  padding: 24px;
  background: #f8f9fb;
}
.totals {
  margin-top: 12px;
  font-size: 19px;
  line-height: 38px;
}

.scrollbar {
  display: flex;
  flex: none;
  flex-direction: column;
  align-items: center;
  width: 23px;
  padding: 6px 0 4px;
  background: #fcfcfc;
}
.track {
  display: flex;
  flex-direction: column;
  align-items: center;
  flex: 1;
}
.thumb {
  width: 13px;
  height: 34%;
  margin-top: 413px;
  border-radius: 7px;
  background: #8b8b8b;
}

/* taskbar */
.taskbar {
  display: flex;
  flex: none;
  align-items: center;
  height: 72px;
  padding-right: 30px;
  border-top: 2px solid #494546;
  background: linear-gradient(to right, #2e2127 0%, #2a2322 6%, #2e2027 15%, #301f2b 21%, #2f2118 28%, #26260f 33%, #23250f 39%, #2a1f26 45%, #2a211f 52%, #2b2022 60%, #2b1f28 66%, #242226 73%, #20261a 80%, #24231f 87%, #2b2030 92%, #261f28 100%);
  color: #fff;
}
.weather {
  position: relative;
  width: 310px;
  height: 70px;
  justify-content: flex-start;
  padding: 4px 0 0 30px;
}
.degrees {
  position: absolute;
  left: 43px;
  top: 8px;
  padding: 0 5px;
  border-radius: 12px;
  background: #2d2d2d;
  font-size: 17px;
  line-height: 23px;
}
.apps {
  display: flex;
}
.app {
  position: relative;
  width: 66px;
  height: 70px;
  padding-bottom: 2px;
}
.app:first-child {
  margin-right: 2px;
}
.app svg {
  position: relative;
  width: 36px;
  height: 36px;
}
.app.active::before {
  content: "";
  position: absolute;
  inset: 4px 3px 6px;
  border: 1px solid #46403d;
  border-radius: 6px;
  background: #37312d;
}
.app.running::after {
  content: "";
  position: absolute;
  bottom: 7px;
  left: 50%;
  width: 9px;
  height: 5px;
  margin-left: -5px;
  border-radius: 3px;
  background: #9b9595;
}
.app.active::after {
  width: 24px;
  margin-left: -12px;
  background: #4cc2ff;
}
.myhp {
  display: flex;
  align-items: center;
  justify-content: center;
  width: 36px;
  height: 36px;
  border-radius: 2px;
  background: #0096d6;
  font-size: 11px;
  line-height: 36px;
}
.myhp b {
  font-size: 15px;
  font-style: italic;
}
.badge {
  position: absolute;
  top: 9px;
  right: 7px;
  width: 24px;
  height: 24px;
  border-radius: 12px;
  background: #ffc20e;
}
.tray {
  display: flex;
  align-items: center;
  margin-left: auto;
  font-size: 18px;
  line-height: 24px;
}
.tray > button {
  min-width: 48px;
  height: 70px;
  padding-bottom: 2px;
}
.tray .language {
  flex-direction: column;
  width: 66px;
}
.tray .system {
  gap: 12px;
  width: 120px;
}
.tray .clock {
  flex-direction: column;
  align-items: flex-end;
  width: 105px;
}
</style>
